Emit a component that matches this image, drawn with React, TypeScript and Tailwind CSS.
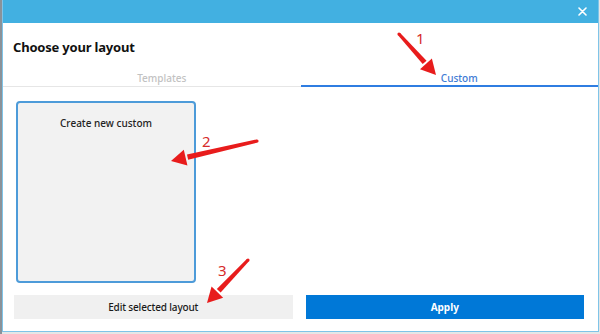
import React from 'react';

type Pt = [number, number];

// red annotation arrow, tail -> tip, drawn over the dialog
function Arrow({ tail, tip }: { tail: Pt; tip: Pt }) {
	const dx = tip[0] - tail[0];
	const dy = tip[1] - tail[1];
	const len = Math.hypot(dx, dy);
	const ux = dx / len;
	const uy = dy / len;
	const nx = -uy;
	const ny = ux;
	const headLen = 17;
	const headW = 8;
	const bx = tip[0] - ux * headLen;
	const by = tip[1] - uy * headLen;
	const tw = 1.6;
	const sw = 2.6;
	const shaft = [
		[tail[0] + nx * tw, tail[1] + ny * tw],
		[bx + nx * sw, by + ny * sw],
		[bx - nx * sw, by - ny * sw],
		[tail[0] - nx * tw, tail[1] - ny * tw],
	]
		.map((p) => p.join(','))
		.join(' ');
	const head = [
		[tip[0], tip[1]],
		[bx + nx * headW + ux * 2, by + ny * headW + uy * 2],
		[bx - nx * headW + ux * 2, by - ny * headW + uy * 2],
	]
		.map((p) => p.join(','))
		.join(' ');
	return (
		<g fill="#e81c1c">
			<polygon points={shaft} />
			<circle cx={tail[0]} cy={tail[1]} r={tw} />
			<polygon points={head} />
		</g>
	);
}

export default function App() {
	return (
		<div className="relative flex h-[334px] w-[600px] overflow-hidden bg-[#e6e6e6] font-['Noto_Sans','Open_Sans',sans-serif]">
			<div className="w-[2px] bg-[#8a9299]" />
			<div className="flex h-[332px] w-[597px] flex-col border-x border-b border-[#7fc4e8] bg-white">
				{/* title bar */}
				<div className="flex h-[23px] shrink-0 items-center justify-end bg-[#42b0e1] pr-[10px]">
					<svg width="9" height="9" viewBox="0 0 9 9" className="mr-[1px]">
						<path d="M1 1 L8 8 M8 1 L1 8" stroke="white" strokeWidth="1.6" strokeLinecap="round" />
					</svg>
				</div>

				<div className="h-[47px] shrink-0 pl-[10px] pt-[14px]">
					<h1 className="text-[13px] leading-[20px] font-bold tracking-[-0.2px] text-[#111]">Choose your layout</h1>
				</div>

				{/* tabs */}
				<div className="grid h-[17px] shrink-0 grid-cols-2 text-[10px] leading-none font-medium">
					<div className="flex items-start justify-center border-b border-[#e6e6e6] pl-[20px] pt-[3px] text-[#c2c2c2]">
						Templates
					</div>
					<div className="flex items-start justify-center border-b-2 border-[#2f7de1] pl-[20px] pt-[3px] text-[#3d7ad4]">
						Custom
					</div>
				</div>

				<div className="flex-1 pl-[13px] pt-[14px]">
					<div className="flex h-[182px] w-[180px] justify-center rounded-[4px] border-2 border-[#4d9bd9] bg-[#f2f2f2] pt-[15px]">
						<span className="text-[10px] leading-none font-medium text-[#222]">Create new custom</span>
					</div>
				</div>

				{/* footer buttons */}
				<div className="mb-[12px] flex h-[24px] shrink-0 gap-[13px] pl-[11px] pr-[14px] text-[10px]">
					<button className="flex-1 bg-[#f0f0f0] font-medium tracking-[-0.15px] text-[#1a1a1a]">Edit selected layout</button>
					<button className="flex-1 bg-[#0078d7] font-bold text-white">Apply</button>
				</div>
			</div>

			<svg className="pointer-events-none absolute inset-0" width="600" height="334">
				<Arrow tail={[399, 34]} tip={[436, 75]} />
				<Arrow tail={[257, 141]} tip={[171, 161]} />
				<Arrow tail={[248, 260]} tip={[207, 303]} />
				<g fill="#d62b2b" fontSize="15" fontFamily="'Noto Sans', sans-serif">
					<text x="416" y="44">1</text>
					<text x="202" y="147">2</text>
					<text x="218" y="276">3</text>
				</g>
			</svg>
		</div>
	);
}
